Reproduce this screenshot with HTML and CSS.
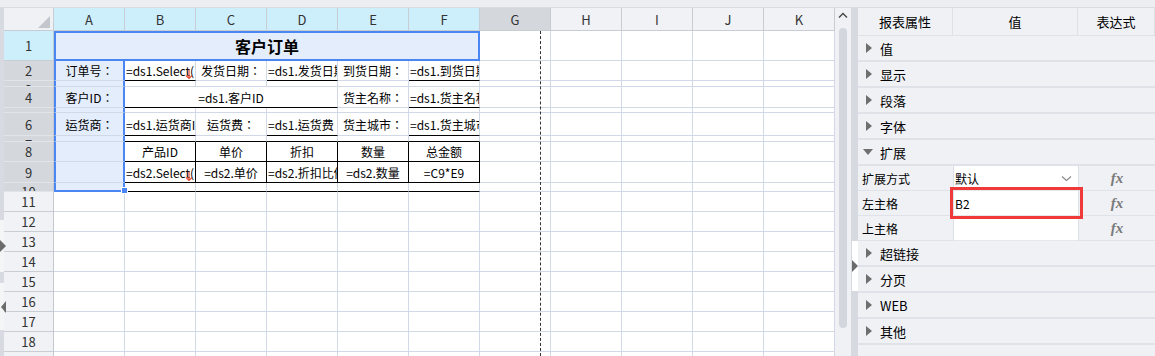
FILE: index.html
```html
<!DOCTYPE html>
<html>
  <head>
    <title>客户订单 - 报表设计</title>
    <link rel="stylesheet" href="styles.css">
  </head>
  <body>
    <div class="topbar"></div>

    <div class="main">
      <!-- left collapse handles -->
      <div class="edge">
        <div class="edge-bar h212"></div>
        <div class="edge-gap h52"><span class="arrow-right"></span></div>
        <div class="edge-bar h11"></div>
        <div class="edge-gap h47"><span class="arrow-left"></span></div>
        <div class="edge-bar grow"></div>
      </div>

      <!-- Sheet -->
      <div class="sheet">
        <div class="row cols h23">
          <div class="corner"></div>
          <div class="on">A</div><div class="on">B</div><div class="on">C</div>
          <div class="on">D</div><div class="on">E</div><div class="on">F</div>
          <div class="dim">G</div>
          <div>H</div><div>I</div><div>J</div><div>K</div>
        </div>

        <div class="row h30">
          <div class="rh on">1</div>
          <div class="title">客户订单</div>
          <div></div><div></div><div></div><div></div><div></div>
        </div>

        <div class="row">
          <div class="rh dim">2</div>
          <div class="sel lbl">订单号：</div>
          <div class="f ul">=ds1.Select(<svg class="expand" width="8" height="11" viewBox="0 0 8 11"><path d="M4 0.5V9.5M1 6.5L4 9.5L7 6.5" fill="none" stroke="#e5482c" stroke-width="1.2"/></svg></div>
          <div class="lbl">发货日期：</div>
          <div class="f ul">=ds1.发货日期</div>
          <div class="lbl">到货日期：</div>
          <div class="f ul">=ds1.到货日期</div>
          <div></div><div></div><div></div><div></div><div></div>
        </div>

        <div class="row thin h6">
          <div class="rh dim">3</div>
          <div class="sel"></div>
          <div></div><div></div><div></div><div></div><div></div>
          <div></div><div></div><div></div><div></div><div></div>
        </div>

        <div class="row h21">
          <div class="rh dim">4</div>
          <div class="sel lbl">客户ID：</div>
          <div class="lbl ul span3">=ds1.客户ID</div>
          <div class="lbl">货主名称：</div>
          <div class="f ul">=ds1.货主名称</div>
          <div></div><div></div><div></div><div></div><div></div>
        </div>

        <div class="row thin h5">
          <div class="rh dim">5</div>
          <div class="sel"></div>
          <div></div><div></div><div></div><div></div><div></div>
          <div></div><div></div><div></div><div></div><div></div>
        </div>

        <div class="row h23">
          <div class="rh dim">6</div>
          <div class="sel lbl">运货商：</div>
          <div class="f ul">=ds1.运货商ID</div>
          <div class="lbl">运货费：</div>
          <div class="f ul">=ds1.运货费</div>
          <div class="lbl">货主城市：</div>
          <div class="f ul">=ds1.货主城市</div>
          <div></div><div></div><div></div><div></div><div></div>
        </div>

        <div class="row thin h6">
          <div class="rh dim">7</div>
          <div class="sel"></div>
          <div class="bb"></div><div class="bb"></div><div class="bb"></div><div class="bb"></div><div class="bb"></div>
          <div></div><div></div><div></div><div></div><div></div>
        </div>

        <div class="row">
          <div class="rh dim">8</div>
          <div class="sel"></div>
          <div class="tb lbl">产品ID</div>
          <div class="tb lbl">单价</div>
          <div class="tb lbl">折扣</div>
          <div class="tb lbl">数量</div>
          <div class="tb lbl">总金额</div>
          <div></div><div></div><div></div><div></div><div></div>
        </div>

        <div class="row h21">
          <div class="rh dim">9</div>
          <div class="sel"></div>
          <div class="tb f">=ds2.Select(<svg class="expand" width="8" height="11" viewBox="0 0 8 11"><path d="M4 0.5V9.5M1 6.5L4 9.5L7 6.5" fill="none" stroke="#e5482c" stroke-width="1.2"/></svg></div>
          <div class="tb lbl">=ds2.单价</div>
          <div class="tb f">=ds2.折扣比例</div>
          <div class="tb lbl">=ds2.数量</div>
          <div class="tb lbl">=C9*E9</div>
          <div></div><div></div><div></div><div></div><div></div>
        </div>

        <div class="row thin h9">
          <div class="rh dim">10</div>
          <div class="sel sel-end"><span class="handle"></span></div>
          <div class="bb"></div><div class="bb"></div><div class="bb"></div><div class="bb"></div><div class="bb"></div>
          <div></div><div></div><div></div><div></div><div></div>
        </div>

        <div class="row"><div class="rh">11</div><div></div><div></div><div></div><div></div><div></div><div></div><div></div><div></div><div></div><div></div><div></div></div>
        <div class="row"><div class="rh">12</div><div></div><div></div><div></div><div></div><div></div><div></div><div></div><div></div><div></div><div></div><div></div></div>
        <div class="row"><div class="rh">13</div><div></div><div></div><div></div><div></div><div></div><div></div><div></div><div></div><div></div><div></div><div></div></div>
        <div class="row"><div class="rh">14</div><div></div><div></div><div></div><div></div><div></div><div></div><div></div><div></div><div></div><div></div><div></div></div>
        <div class="row"><div class="rh">15</div><div></div><div></div><div></div><div></div><div></div><div></div><div></div><div></div><div></div><div></div><div></div></div>
        <div class="row"><div class="rh">16</div><div></div><div></div><div></div><div></div><div></div><div></div><div></div><div></div><div></div><div></div><div></div></div>
        <div class="row"><div class="rh">17</div><div></div><div></div><div></div><div></div><div></div><div></div><div></div><div></div><div></div><div></div><div></div></div>
        <div class="row"><div class="rh">18</div><div></div><div></div><div></div><div></div><div></div><div></div><div></div><div></div><div></div><div></div><div></div></div>
        <div class="row"><div class="rh">19</div><div></div><div></div><div></div><div></div><div></div><div></div><div></div><div></div><div></div><div></div><div></div></div>

        <!-- page break marker -->
        <div class="page-break"></div>
      </div>

      <div class="vscroll">
        <svg width="10" height="6" viewBox="0 0 10 6"><path d="M1 5.5L5 1.5L9 5.5" fill="none" stroke="#444" stroke-width="1.4"/></svg>
        <div class="thumb"></div>
      </div>

      <div class="divider">
        <div class="divider-bar h233"></div>
        <div class="divider-gap"><span class="arrow-right"></span></div>
        <div class="divider-bar grow"></div>
      </div>

      <!-- Property panel -->
      <aside class="panel">
        <div class="panel-head">
          <div>报表属性</div>
          <div>值</div>
          <div>表达式</div>
        </div>

        <div class="group"><span class="tri"></span>值</div>
        <div class="group"><span class="tri"></span>显示</div>
        <div class="group"><span class="tri"></span>段落</div>
        <div class="group"><span class="tri"></span>字体</div>
        <div class="group"><span class="tri down"></span>扩展</div>

        <div class="prop">
          <div class="prop-name">扩展方式</div>
          <div class="prop-value">默认<svg width="11" height="7" viewBox="0 0 11 7"><path d="M1 1.5L5.5 5.5L10 1.5" fill="none" stroke="#888" stroke-width="1.1"/></svg></div>
          <div class="prop-expr"><i class="fx">fx</i></div>
        </div>
        <div class="prop">
          <div class="prop-name">左主格</div>
          <div class="prop-value">B2<span class="mark"></span></div>
          <div class="prop-expr"><i class="fx">fx</i></div>
        </div>
        <div class="prop">
          <div class="prop-name">上主格</div>
          <div class="prop-value"></div>
          <div class="prop-expr"><i class="fx">fx</i></div>
        </div>

        <div class="group"><span class="tri"></span>超链接</div>
        <div class="group"><span class="tri"></span>分页</div>
        <div class="group"><span class="tri"></span>WEB</div>
        <div class="group"><span class="tri"></span>其他</div>
      </aside>
    </div>
  </body>
</html>
```

FILE: styles.css
```css
* {
  box-sizing: border-box;
}

body {
  margin: 0;
  width: 1155px;
  height: 356px;
  overflow: hidden;
  background: #eff1f4;
  font-family: "Noto Sans CJK SC", "Noto Sans", sans-serif;
  font-size: 12px;
  color: #000;
}

.topbar {
  height: 8px;
  background: #eceef1;
  border-bottom: 1px solid #d9dce1;
}

.main {
  display: flex;
  height: 348px;
}

/* Left edge handles */
.edge {
  width: 4px;
  display: flex;
  flex-direction: column;
  position: relative;
  z-index: 2;
}

.edge-bar {
  background: #d7dbe1;
}

.edge-gap {
  display: flex;
  align-items: center;
  background: #f4f5f7;
}

.h212 { height: 212px; }
.h52 { height: 52px; }
.h11 { height: 11px; }
.h47 { height: 47px; }
.h233 { height: 233px; }
.grow { flex: 1; }

.arrow-right {
  width: 0;
  height: 0;
  border-left: 6px solid #6b6b6b;
  border-top: 6px solid transparent;
  border-bottom: 6px solid transparent;
}

.arrow-left {
  width: 0;
  height: 0;
  margin-left: 1px;
  border-right: 5px solid #6b6b6b;
  border-top: 6px solid transparent;
  border-bottom: 6px solid transparent;
}

/* Sheet grid */
.sheet {
  position: relative;
  width: 831px;
  background: #fff;
  overflow: hidden;
  font-family: "Noto Sans CJK TC", "Noto Sans CJK SC", sans-serif;
}

.row {
  display: grid;
  grid-template-columns: 50px repeat(11, 71px);
  height: 20px;
}

.row.h5 { height: 5px; }
.row.h6 { height: 6px; }
.row.h9 { height: 9px; }
.row.h21 { height: 21px; }
.row.h23 { height: 23px; }
.row.h30 { height: 30px; }

.row > div {
  display: flex;
  align-items: center;
  overflow: hidden;
  white-space: nowrap;
  border-right: 1px solid #d2d9e6;
  border-bottom: 1px solid #d2d9e6;
}

.cols > div {
  justify-content: center;
  background: #f0f2f5;
  font-size: 13px;
  color: #333;
}

.row.cols > div {
  border-right-color: #c8cdd4;
  border-bottom-color: #c8cdd4;
}

.cols > .on {
  background: #cdeefb;
}

.cols > .dim {
  background: #d4d7dc;
}

.cols > .corner {
  justify-content: flex-end;
  align-items: flex-end;
  padding: 0 3px 2px 0;
  background: #eff1f4;
}

.corner::after {
  content: "";
  border-left: 12px solid transparent;
  border-bottom: 12px solid #c3c7cd;
}

.row > .rh {
  justify-content: center;
  background: #f0f2f5;
  font-size: 13px;
  color: #333;
  border-right-color: #c3c8cf;
  border-bottom-color: #c9ced5;
}

.row > .rh.on {
  background: #cdeefb;
}

.row > .rh.dim {
  background: #d4d8dd;
  border-bottom-color: #e1e4e8;
}

.row.thin > .rh {
  align-items: flex-start;
  line-height: 17px;
}

.lbl {
  justify-content: center;
}

.f {
  position: relative;
  padding-left: 1px;
}

.expand {
  position: absolute;
  right: 2px;
  bottom: 0;
}

.span3 {
  grid-column: span 3;
}

.row > .ul,
.row > .bb {
  border-bottom-color: #000;
}

.row > .tb {
  border-right-color: #000;
  border-bottom-color: #000;
}

/* Selection */
.row > .title {
  grid-column: span 6;
  justify-content: center;
  background: #e4edfc;
  border: 2px solid #4b87f2;
  font-size: 16px;
  font-weight: bold;
}

.row > .sel {
  background: #e4edfc;
  border-left: 2px solid #4b87f2;
  border-right: 2px solid #4b87f2;
}

.row > .sel-end {
  position: relative;
  z-index: 1;
  overflow: visible;
  border-bottom: 2px solid #4b87f2;
}

.handle {
  position: absolute;
  right: -5px;
  bottom: -4px;
  width: 7px;
  height: 7px;
  background: #4b87f2;
  border: 1px solid #fff;
}

.page-break {
  position: absolute;
  left: 536px;
  top: 23px;
  bottom: 0;
  border-left: 1px dashed #333;
}

/* Sheet scrollbar */
.vscroll {
  width: 16px;
  display: flex;
  flex-direction: column;
  align-items: center;
  background: #eff1f4;
}

.vscroll svg {
  margin-top: 4px;
}

.thumb {
  width: 8px;
  height: 300px;
  margin-top: 10px;
  border-radius: 4px;
  background: #d3d7dd;
}

.divider {
  width: 7px;
  display: flex;
  flex-direction: column;
}

.divider-bar {
  background: #d6dae0;
}

.divider-gap {
  height: 50px;
  display: flex;
  align-items: center;
  background: #fff;
  border-left: 1px solid #d6dae0;
}

/* Property panel */
.panel {
  flex: 1;
  background: #eff1f5;
  font-size: 13px;
}

.panel-head {
  display: grid;
  grid-template-columns: 95px 125px 1fr;
  height: 28px;
  border-bottom: 1px solid #dfe2e7;
}

.panel-head div {
  display: flex;
  align-items: center;
  justify-content: center;
  border-right: 1px solid #dde0e6;
}

.group {
  display: flex;
  align-items: center;
  gap: 8px;
  height: 26px;
  padding-left: 8px;
  border-bottom: 2px solid #dfe2e8;
}

.tri {
  width: 0;
  height: 0;
  border-left: 6px solid #6f6f6f;
  border-top: 5px solid transparent;
  border-bottom: 5px solid transparent;
}

.tri.down {
  margin-left: -3px;
  margin-right: -1px;
  border-left: 5px solid transparent;
  border-right: 5px solid transparent;
  border-top: 6px solid #6f6f6f;
  border-bottom: 0;
}

.prop {
  display: grid;
  grid-template-columns: 95px 125px 1fr;
  height: 25px;
  font-size: 12px;
}

.prop-name {
  display: flex;
  align-items: center;
  padding-left: 4px;
  border-bottom: 1px solid #dfe2e8;
}

.prop-value {
  position: relative;
  display: flex;
  align-items: center;
  justify-content: space-between;
  padding: 0 6px 0 1px;
  background: #fff;
  border-left: 1px solid #dde0e6;
  border-bottom: 1px solid #e4e7ec;
}

.prop-expr {
  display: flex;
  align-items: center;
  justify-content: center;
  border-left: 1px solid #dde0e6;
  border-bottom: 1px solid #dfe2e8;
}

.fx {
  font-family: "Liberation Serif", serif;
  font-size: 15px;
  font-style: italic;
  font-weight: bold;
  color: #7a7a7a;
}

.mark {
  position: absolute;
  z-index: 1;
  left: -4px;
  top: -4px;
  right: -5px;
  bottom: -4px;
  border: 3px solid #f03a3a;
}
```
